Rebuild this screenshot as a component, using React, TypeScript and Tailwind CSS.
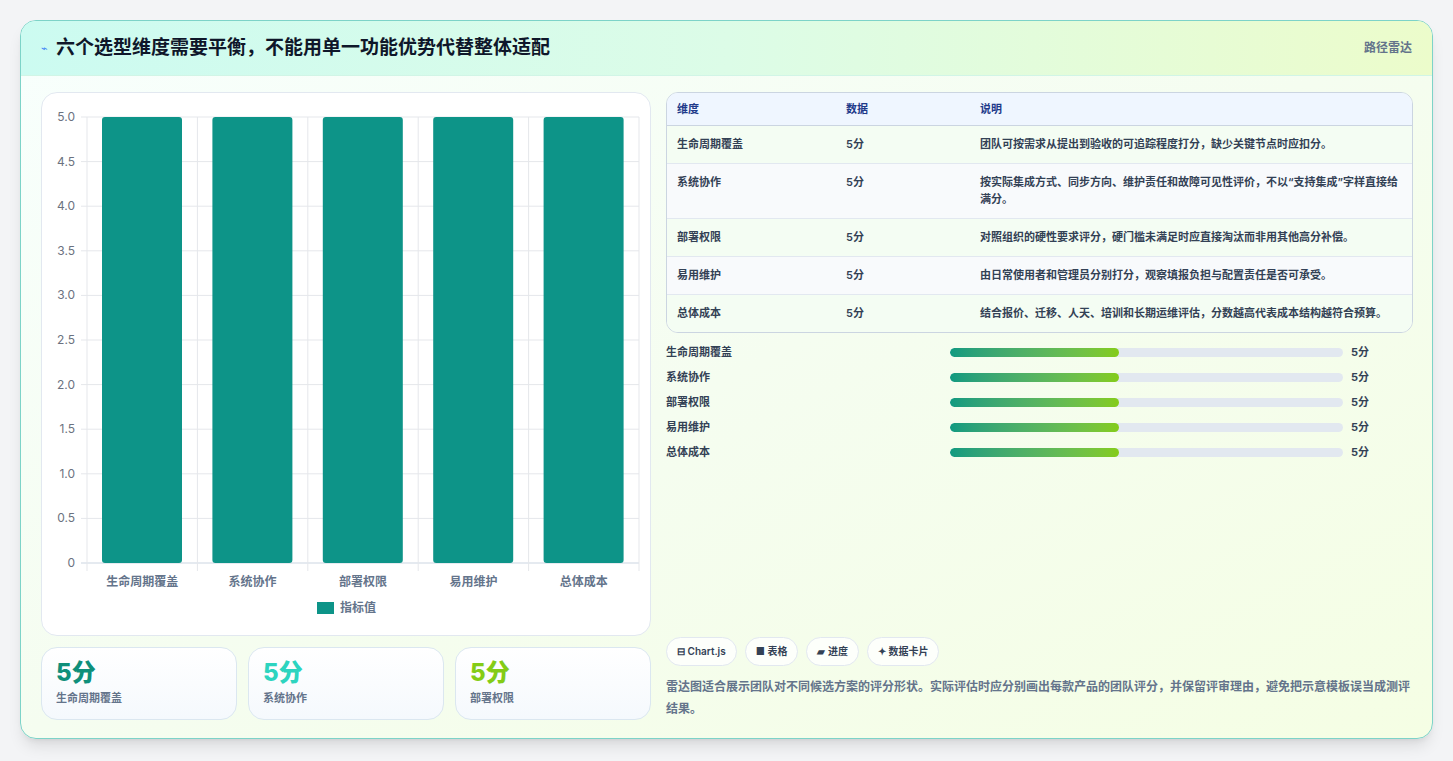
import React from "react";

const rows = [
  ["生命周期覆盖", "5分", "团队可按需求从提出到验收的可追踪程度打分，缺少关键节点时应扣分。"],
  ["系统协作", "5分", "按实际集成方式、同步方向、维护责任和故障可见性评价，不以“支持集成”字样直接给满分。"],
  ["部署权限", "5分", "对照组织的硬性要求评分，硬门槛未满足时应直接淘汰而非用其他高分补偿。"],
  ["易用维护", "5分", "由日常使用者和管理员分别打分，观察填报负担与配置责任是否可承受。"],
  ["总体成本", "5分", "结合报价、迁移、人天、培训和长期运维评估，分数越高代表成本结构越符合预算。"],
];
const cats = ["生命周期覆盖", "系统协作", "部署权限", "易用维护", "总体成本"];

function Chart() {
  const W = 610, H = 544;
  const x0 = 45, x1 = 597, y0 = 24, y1 = 470;
  const step = (x1 - x0) / 5;
  const ticks = [5, 4.5, 4, 3.5, 3, 2.5, 2, 1.5, 1, 0.5, 0];
  return (
    <svg width={W} height={H} className="block">
      {ticks.map((t) => {
        const y = y1 - (t / 5) * (y1 - y0);
        return (
          <g key={t}>
            <line x1={x0 - 6} x2={x1} y1={y} y2={y} stroke={t === 0 ? "#cbd5e1" : "#e5e7eb"} />
            <text x={x0 - 12} y={y + 4} textAnchor="end" fontSize="12" fill="#6b7280">{t === 0 ? "0" : t.toFixed(1)}</text>
          </g>
        );
      })}
      {[0, 1, 2, 3, 4, 5].map((i) => (
        <line key={i} x1={x0 + i * step} x2={x0 + i * step} y1={y0} y2={y1 + 8} stroke="#e5e7eb" />
      ))}
      {cats.map((c, i) => (
        <g key={c}>
          <rect x={x0 + i * step + 15} y={y0} width={80} height={y1 - y0} rx={3} fill="#0d9488" />
          <text x={x0 + i * step + step / 2} y={y1 + 23} textAnchor="middle" fontSize="12" fontWeight="600" fill="#64748b">{c}</text>
        </g>
      ))}
      <rect x={275} y={509} width={17} height={12} fill="#0d9488" />
      <text x={298} y={519} fontSize="12" fontWeight="600" fill="#64748b">指标值</text>
    </svg>
  );
}

export default function App() {
  return (
    <div className="min-h-[761px] bg-[#f3f4f6] pt-5 px-5 pb-5" style={{ fontFamily: "Inter, 'Noto Sans CJK SC', sans-serif" }}>
      <div className="rounded-2xl border border-[#7dd3c8] overflow-hidden shadow-lg bg-gradient-to-br from-[#f8fffd] via-[#f5fdf0] to-[#f5fee4]">
        <div className="h-[55px] flex items-center justify-between px-5 bg-gradient-to-r from-[#ccfbf1] via-[#dcfce7] to-[#ecfccb] border-b border-[#d1f5e6]">
          <div className="flex items-center gap-2">
            <span className="text-[#3b82f6] text-[11px]">⌁</span>
            <span className="text-[19px] font-bold text-[#0f172a]">六个选型维度需要平衡，不能用单一功能优势代替整体适配</span>
          </div>
          <span className="text-[12px] font-semibold text-[#64748b]">路径雷达</span>
        </div>
        <div className="flex gap-[15px] pl-5 pr-[19px] pt-4 pb-[18px]">
          <div className="w-[610px] flex flex-col gap-[11px]">
            <div className="h-[544px] rounded-2xl bg-white border border-[#e2e8f0]">
              <Chart />
            </div>
            <div className="grid grid-cols-3 gap-[11px]">
              {[["生命周期覆盖", "text-[#0f8f7a]"], ["系统协作", "text-[#2dd4bf]"], ["部署权限", "text-[#84cc16]"]].map(([l, c]) => (
                <div key={l} className="h-[73px] rounded-2xl border border-[#dbe7f0] bg-gradient-to-b from-white to-[#f5f9fd] px-[14px] pt-[10px]">
                  <div className={`text-[24px] font-extrabold leading-[30px] ${c}`}>5分</div>
                  <div className="text-[11px] font-semibold text-[#64748b] mt-[2px]">{l}</div>
                </div>
              ))}
            </div>
          </div>
          <div className="flex-1 flex flex-col">
            <div className="rounded-xl border border-[#cbd5e1] overflow-hidden bg-white/60">
              <div className="flex h-[33px] items-center bg-[#eff6ff] border-b border-[#cbd5e1] text-[11px] font-semibold text-[#1e3a8a]">
                <div className="w-[179px] pl-[10px]">维度</div>
                <div className="w-[134px]">数据</div>
                <div className="flex-1">说明</div>
              </div>
              {rows.map((r, i) => (
                <div key={r[0]} className={`flex py-[10px] text-[11px] font-semibold text-[#334155] leading-[17px] ${i % 2 ? "bg-[#f8fafc]" : "bg-[#f4fdf3]"} ${i < 4 ? "border-b border-[#e2e8f0]" : ""}`}>
                  <div className="w-[179px] pl-[10px]">{r[0]}</div>
                  <div className="w-[134px]">{r[1]}</div>
                  <div className="flex-1 pr-3">{r[2]}</div>
                </div>
              ))}
            </div>
            <div className="mt-[10px] flex flex-col gap-[7px]">
              {cats.map((c) => (
                <div key={c} className="flex items-center h-[18px] text-[11px] font-semibold text-[#334155]">
                  <div className="w-[284px]">{c}</div>
                  <div className="w-[393px] h-[9px] rounded-full bg-[#e2e8f0] overflow-hidden">
                    <div className="h-full rounded-full bg-gradient-to-r from-[#0f9a80] to-[#84cc16]" style={{ width: "43%" }} />
                  </div>
                  <div className="ml-2 font-bold">5分</div>
                </div>
              ))}
            </div>
            <div className="flex-1" />
            <div className="flex gap-[8px]">
              {["⊟ Chart.js", "■ 表格", "▰ 进度", "✦ 数据卡片"].map((t) => (
                <div key={t} className="h-[29px] px-[10px] flex items-center rounded-full border border-[#e2e8f0] bg-white/80 text-[10px] font-semibold text-[#334155]">{t}</div>
              ))}
            </div>
            <p className="mt-[10px] text-[12px] leading-[22px] font-semibold text-[#64748b]">雷达图适合展示团队对不同候选方案的评分形状。实际评估时应分别画出每款产品的团队评分，并保留评审理由，避免把示意模板误当成测评结果。</p>
          </div>
        </div>
      </div>
    </div>
  );
}
